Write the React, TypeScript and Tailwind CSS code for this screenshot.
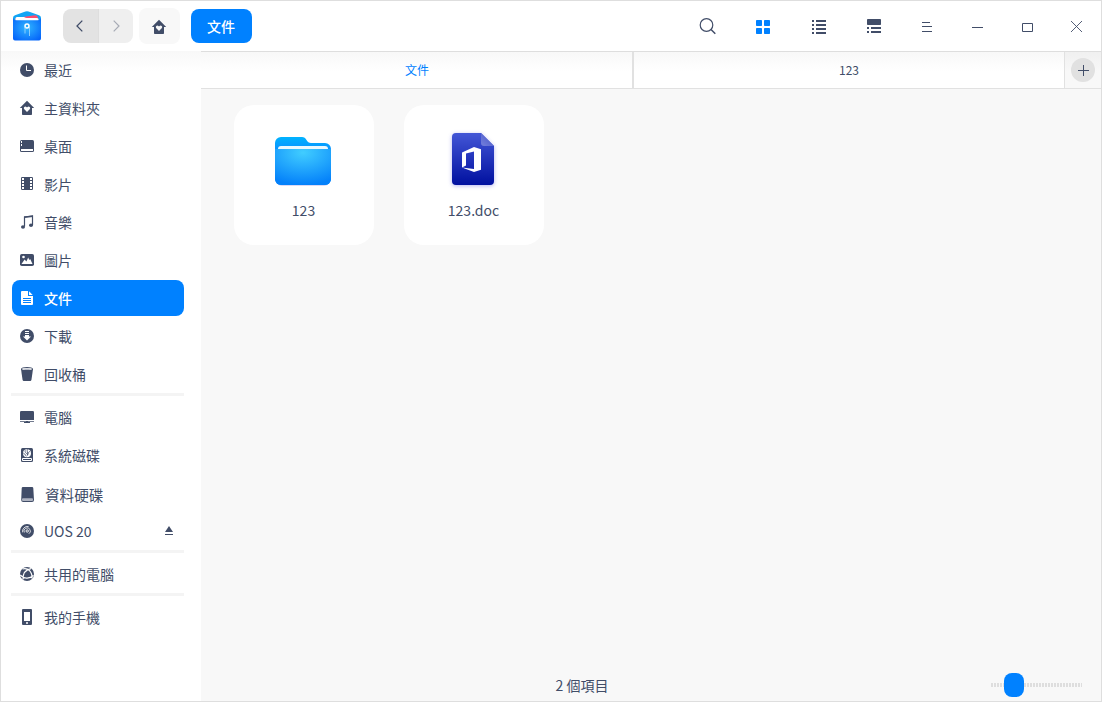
import type { ReactNode } from 'react';

const Svg16 = ({ children }: { children: ReactNode }) => (
  <svg width="16" height="16" viewBox="0 0 16 16" fill="currentColor" className="shrink-0">
    {children}
  </svg>
);

const HomeGlyph = () => (
  <path
    fillRule="evenodd"
    d="M8 .8 15.200 8H13v6.200a.8.8 0 0 1-.8.8H3.800a.8.8 0 0 1-.8-.8V8H.8zM8 12l2.700-2.700a1.500 1.500 0 0 0-2.200-2.200L8 7.600l-.5-.5a1.500 1.500 0 0 0-2.200 2.200z"
  />
);

const icons: Record<string, ReactNode> = {
  clock: (
    <>
      <circle cx="8" cy="8" r="7" />
      <path d="M7.5 3.5V8.5H12" fill="none" stroke="#fff" />
    </>
  ),
  home: <HomeGlyph />,
  desktop: (
    <>
      <rect x="1" y="2" width="14" height="12" rx="1.5" />
      <path d="M2 11h12v1.5a.5.5 0 0 1-.5.5h-11a.5.5 0 0 1-.5-.5zM2 3h1v2H2zM2 6h1v2H2z" fill="#fff" />
    </>
  ),
  film: (
    <>
      <rect x="2" y="1" width="12" height="13" rx="1.3" />
      <path
        d="M3 2h2v2H3zM3 5h2v2H3zM3 8h2v2H3zM3 11h2v2H3zM11 2h2v2h-2zM11 5h2v2h-2zM11 8h2v2h-2zM11 11h2v2h-2z"
        fill="#fff"
      />
    </>
  ),
  music: (
    <>
      <path d="M5.5 12.5V3L13.5 2V11" fill="none" stroke="currentColor" strokeWidth="1.2" />
      <path d="M5 2.5 14 1.5V3L5 4z" />
      <ellipse cx="4" cy="13" rx="2" ry="1.8" />
      <ellipse cx="12" cy="11.2" rx="2" ry="1.8" />
    </>
  ),
  picture: (
    <>
      <rect x="1" y="2" width="14" height="12" rx="1.8" />
      <circle cx="4.5" cy="5" r="1.3" fill="#fff" />
      <path d="M2.500 12 5.600 7.400 7.400 9.600 9.200 5.600 10.300 8 11.200 7 13.500 12z" fill="#fff" />
    </>
  ),
  document: (
    <>
      <path d="M3 1h6v5h5v8a1 1 0 0 1-1 1H3a1 1 0 0 1-1-1V2a1 1 0 0 1 1-1z" />
      <path d="M10 1.3 13.7 5H10z" />
      <path d="M4 8.5h8M4 10.5h8M4 12.5h8" stroke="#0081ff" />
    </>
  ),
  download: (
    <>
      <circle cx="8" cy="8" r="7" />
      <path d="M6 3h4v1H6zM6 5h4v1H6zM6 7h4v1.500h2L8 12.500l-4-4h2z" fill="#fff" />
    </>
  ),
  trash: (
    <>
      <ellipse cx="8" cy="3" rx="6" ry="2" />
      <path d="M2 3h12l-1.500 10.400c-.2 1-.8 1.600-1.800 1.600H5.300c-1 0-1.600-.6-1.800-1.600z" />
      <ellipse cx="8" cy="3" rx="5" ry="1.100" fill="#fff" />
      <ellipse cx="8" cy="3.300" rx="3.500" ry=".7" fill="#b4b9c5" />
    </>
  ),
  computer: (
    <>
      <rect x="1" y="2" width="14" height="9" rx="1.300" />
      <path d="M1 9h14v2H1zM7 12h2v1h2v1H5v-1h2z" />
      <path d="M1 12h14v1H1z" opacity=".75" />
    </>
  ),
  systemDisk: (
    <>
      <rect x="2" y="1" width="12" height="14" rx="1.500" />
      <circle cx="8" cy="6.200" r="4" fill="#fff" />
      <path
        d="M6.200 3.200c-.5 2 1 3 2.300 4.300M8.500 2.400c-.8 2 .5 2.800 0 5.600M10.800 4.200c-1 1-1.800 1.800-2.300 4.400M4.300 6.200c1 .2 2 1 3 3.200"
        fill="none"
        stroke="currentColor"
        strokeWidth=".8"
      />
      <path d="M3.500 11.500h9v2h-9z" fill="none" stroke="#fff" />
      <path d="M4 12h8v1H4z" />
    </>
  ),
  dataDisk: (
    <>
      <path d="M4 0h9a1.300 1.300 0 0 1 1.300 1.300L15 13a2 2 0 0 1-2 2H4.200a2 2 0 0 1-2-2L2.700 1.300A1.300 1.300 0 0 1 4 0z" />
      <rect x="3" y="11.300" width="11" height="2.700" rx="1" fill="#aeb3c0" />
    </>
  ),
  disc: (
    <>
      <circle cx="8" cy="8" r="7" />
      <circle cx="8.200" cy="8" r="1.200" fill="none" stroke="#fff" strokeWidth=".9" />
      <path d="M5.300 9.500a3.200 3.200 0 1 1 4.500 1.300M3.600 9.300a5 5 0 0 1 6-5.800" fill="none" stroke="#fff" strokeWidth=".8" />
    </>
  ),
  globe: (
    <>
      <circle cx="8" cy="8" r="7" />
      <path
        d="M3.500 3C9 1.500 13.500 5.500 13 12.500M12 2.600C7 3.500 3.800 7.500 4 13.500M1.200 9C4.500 12.500 10 13.500 14.500 9.500"
        fill="none"
        stroke="#fff"
        strokeWidth="1.200"
      />
    </>
  ),
  phone: (
    <path fillRule="evenodd" d="M4 0h8a1 1 0 0 1 1 1v14a1 1 0 0 1-1 1H4a1 1 0 0 1-1-1V1a1 1 0 0 1 1-1zM5 3v9h6V3zM7 13.200v1.500h2v-1.500z" />
  ),
};

type Place = { icon: string; label: string; active?: boolean; shifted?: boolean; eject?: boolean };

const groups: Place[][] = [
  [
    { icon: 'clock', label: '最近' },
    { icon: 'home', label: '主資料夾' },
    { icon: 'desktop', label: '桌面' },
    { icon: 'film', label: '影片' },
    { icon: 'music', label: '音樂' },
    { icon: 'picture', label: '圖片' },
    { icon: 'document', label: '文件', active: true },
    { icon: 'download', label: '下載' },
    { icon: 'trash', label: '回收桶' },
  ],
  [
    { icon: 'computer', label: '電腦' },
    { icon: 'systemDisk', label: '系統磁碟' },
    { icon: 'dataDisk', label: '資料硬碟', shifted: true },
    { icon: 'disc', label: 'UOS 20', eject: true },
  ],
  [{ icon: 'globe', label: '共用的電腦' }],
  [{ icon: 'phone', label: '我的手機' }],
];

const PlaceRow = ({ place }: { place: Place }) => (
  <li
    className={
      place.active
        ? 'flex h-9 items-center rounded-lg bg-[#0081ff] pr-[11px] pl-[7px] font-medium text-white'
        : place.shifted
          ? 'flex h-9 items-center pt-[3px] pr-[11px] pl-[7px] text-[14.6px]'
          : 'flex h-9 items-center pr-[11px] pl-[7px]'
    }
  >
    <Svg16>{icons[place.icon]}</Svg16>
    <span className={place.shifted ? 'ml-2.5 leading-5' : 'ml-[9px] leading-5'}>{place.label}</span>
    {place.eject && (
      <svg width="8" height="9" viewBox="0 0 8 9" fill="currentColor" className="mb-px ml-auto">
        <path d="M4 0 8 6H0zM0 8h8v1H0z" />
      </svg>
    )}
  </li>
);

const Sidebar = () => (
  <nav className="w-[200px] shrink-0 bg-white bg-linear-to-b from-[#f8f8f8] to-white to-[20px] pt-px">
    {groups.map((group, i) => (
      <div key={i}>
        {i > 0 && <div className="mt-px mb-[3px] ml-2.5 h-[3px] w-[173px] bg-[#f4f4f4]" />}
        <ul className="ml-[11px] flex w-[172px] flex-col gap-0.5">
          {group.map((p) => (
            <PlaceRow key={p.label} place={p} />
          ))}
        </ul>
      </div>
    ))}
  </nav>
);

const AppLogo = () => (
  <svg width="28" height="30" viewBox="0 0 28 30" className="mb-px">
    <defs>
      <radialGradient id="logoFront" cx=".5" cy=".45" r=".65">
        <stop offset="0" stopColor="#30b5ff" />
        <stop offset="1" stopColor="#0565fa" />
      </radialGradient>
    </defs>
    <path d="M0 9V7Q0 5 2 4.200L11 1Q14-.3 17 1L26 4.200Q28 5 28 7V9z" fill="#12a5f5" />
    <path d="M2.500 7 22 4.300Q25 4.500 25.500 9H2.500z" fill="#ff4c6e" />
    <path d="M2.500 7.500Q2.500 6 4 6H11Q12.500 7 14 7H24Q25.500 7 25.500 8.500V10H2.500z" fill="#fff" />
    <path d="M0 6Q0 9.300 3.500 9.300H24.500Q28 9.300 28 6V27.500Q28 29.500 26 29.500H2Q0 29.500 0 27.500z" fill="url(#logoFront)" />
    <circle cx="14" cy="15" r="2" fill="none" stroke="#fff" strokeWidth="1.500" />
    <path d="M12 16v6.500M16.500 16v9" stroke="#a5dcff" strokeWidth=".8" />
  </svg>
);

const TitleBar = () => (
  <header className="flex h-[50px] shrink-0 items-center bg-white pr-[19px] pl-3">
    <AppLogo />
    <div className="ml-[22px] flex h-[34px] w-[70px] overflow-hidden rounded-lg">
      <button className="flex w-[35px] items-center justify-center bg-[#e3e3e3] pr-0.5">
        <svg width="7" height="12" viewBox="0 0 7 12" fill="none" stroke="currentColor" strokeWidth="1.300">
          <path d="M6.300.600 1 6l5.300 5.400" />
        </svg>
      </button>
      <button className="flex w-[35px] items-center justify-center border-l border-[#dedede] bg-[#efefef] text-[#a7abb5]">
        <svg width="7" height="12" viewBox="0 0 7 12" fill="none" stroke="currentColor" strokeWidth="1.200">
          <path d="M.7.600 6 6 .7 11.400" />
        </svg>
      </button>
    </div>
    <button className="ml-1.5 flex h-9 w-[41px] items-center justify-center rounded-lg bg-[#f8f8f8] pt-px pr-px">
      <Svg16>
        <HomeGlyph />
      </Svg16>
    </button>
    <button className="ml-[11px] h-[34px] w-[61px] rounded-lg bg-[#0081ff] pr-px font-medium text-white">文件</button>

    <div className="mt-0.5 ml-auto flex items-center">
      <svg width="17" height="17" viewBox="0 0 17 17" fill="none" stroke="currentColor" strokeWidth="1.200" className="mb-0.5">
        <circle cx="7.500" cy="7" r="6.300" />
        <path d="m12 11.500 4.300 4.300" strokeWidth="1.500" />
      </svg>
      <svg width="14" height="14" viewBox="0 0 14 14" className="ml-10 fill-[#0081ff]">
        <rect width="6" height="6" rx=".7" />
        <rect x="8" width="6" height="6" rx=".7" />
        <rect y="8" width="6" height="6" rx=".7" />
        <rect x="8" y="8" width="6" height="6" rx=".7" />
      </svg>
      <svg width="14" height="14" viewBox="0 0 14 14" fill="currentColor" className="ml-[42px]">
        <path d="M0 0h2v2H0zM4 0h10v2H4zM0 4h2v2H0zM4 4h10v2H4zM0 8h2v2H0zM4 8h10v2H4zM0 12h2v2H0zM4 12h10v2H4z" />
      </svg>
      <svg width="14" height="14" viewBox="0 0 14 14" fill="currentColor" className="mb-0.5 ml-[41px]">
        <rect width="14" height="6" rx=".8" />
        <path d="M0 8h2v2H0zM4 8h10v2H4zM0 12h2v2H0zM4 12h10v2H4z" />
      </svg>
      <svg width="10" height="10" viewBox="0 0 10 10" fill="currentColor" className="ml-[41px]">
        <path d="M0 0h8v1H0zM0 4h10v1H0zM0 9h10v1H0z" />
      </svg>
      <svg width="11" height="1" viewBox="0 0 11 1" fill="currentColor" className="mt-px ml-10">
        <path d="M0 0h11v1H0z" />
      </svg>
      <svg width="11" height="9" viewBox="0 0 11 9" fill="none" stroke="currentColor" className="mt-px ml-[39px]">
        <path d="M.5.500h10v8H.5z" />
      </svg>
      <svg width="11" height="11" viewBox="0 0 11 11" fill="none" stroke="currentColor" strokeWidth=".9" className="mb-px ml-[38px]">
        <path d="m0 0 11 11M11 0 0 11" />
      </svg>
    </div>
  </header>
);

const FolderIcon = () => (
  <svg width="64" height="64" viewBox="0 0 64 64">
    <defs>
      <linearGradient id="folderBack" x2="0" y2="1">
        <stop offset="0" stopColor="#00b3ff" />
        <stop offset=".3" stopColor="#0b8dff" />
      </linearGradient>
      <radialGradient id="folderFront" cx=".5" cy=".1" r=".9">
        <stop offset="0" stopColor="#41cdff" />
        <stop offset="1" stopColor="#0481fa" />
      </radialGradient>
    </defs>
    <rect x="5" y="20" width="54" height="38" rx="6" fill="#b8b4ea" opacity=".5" />
    <path d="M4 15a6 6 0 0 1 6-6H31Q34 9 35.500 12 37 15 40 15H54a6 6 0 0 1 6 6V51a6 6 0 0 1-6 6H10a6 6 0 0 1-6-6z" fill="url(#folderBack)" />
    <path d="M7 22V21a3 3 0 0 1 3-3H54a3 3 0 0 1 3 3V22z" fill="#e9f8ff" />
    <path d="M4 21H60V51a6 6 0 0 1-6 6H10a6 6 0 0 1-6-6z" fill="url(#folderFront)" />
  </svg>
);

const DocIcon = () => (
  <svg width="64" height="64" viewBox="0 0 64 64">
    <defs>
      <linearGradient id="docBody" x2="0" y2="1">
        <stop offset="0" stopColor="#4356d6" />
        <stop offset="1" stopColor="#00109f" />
      </linearGradient>
      <linearGradient id="docFold" x1="1" y1="0" x2="0" y2="1">
        <stop offset=".4" stopColor="#5664ce" />
        <stop offset="1" stopColor="#7580dc" />
      </linearGradient>
    </defs>
    <path
      d="M15 5H40L53 18V53a4 4 0 0 1-4 4H15a4 4 0 0 1-4-4V9a4 4 0 0 1 4-4z"
      fill="url(#docBody)"
      className="drop-shadow-[0_1px_2px_rgba(70,70,220,0.4)]"
    />
    <path d="M40 5 53 18H43a3 3 0 0 1-3-3z" fill="url(#docFold)" />
    <path d="M21 24.500 33 19l7 2.300V41.700L33 44 21 39.500 33 41V23.500L25 25.500V37.500L21 39.500z" fill="#fff" />
  </svg>
);

const FileCard = ({ name, children }: { name: string; children: ReactNode }) => (
  <figure className="flex h-[140px] w-[140px] flex-col items-center rounded-[20px] bg-white pt-[23.5px] pr-px">
    {children}
    <figcaption className="mt-[8px] pl-px leading-[21px]">{name}</figcaption>
  </figure>
);

const Tabs = () => (
  <div className="flex h-[37px] shrink-0 border-b border-[#e1e1e1] bg-white bg-linear-to-b from-[#f8f8f8] to-white to-[20px] text-[12px]">
    <div className="flex w-[431px] items-center justify-center pl-px text-[#0081ff]">文件</div>
    <div className="flex w-[433px] items-center justify-center border-r border-l-2 border-[#e1e1e1]">123</div>
    <div className="flex flex-1 items-center justify-center bg-[#f7f7f7] bg-linear-to-b from-[#f0f0f0] to-[#f8f8f8] to-[20px]">
      <button className="flex size-6 items-center justify-center rounded-full bg-[#e1e1e1]">
        <svg width="11" height="11" viewBox="0 0 11 11" stroke="currentColor">
          <path d="M5.500 0v11M0 5.500h11" />
        </svg>
      </button>
    </div>
  </div>
);

const StatusBar = () => (
  <footer className="grid h-8 shrink-0 grid-cols-[1fr_auto_1fr] items-center">
    <span />
    <span className="mr-[138px] leading-5">2 個項目</span>
    <div className="mr-[18px] flex h-6 w-[92px] items-center justify-self-end bg-[repeating-linear-gradient(90deg,#dedede_0_2px,transparent_2px_3px)] bg-[length:91px_4px] bg-[position:0_50%] bg-no-repeat pl-[13px]">
      <div className="h-6 w-5 rounded-lg bg-[#0081ff]" />
    </div>
  </footer>
);

export default function App() {
  return (
    <div className="flex h-[702px] w-[1102px] flex-col overflow-hidden border border-[#dedede] bg-white font-['Noto_Sans_CJK_SC',sans-serif] text-[14px] text-[#414d68]">
      <TitleBar />
      <div className="flex min-h-0 flex-1">
        <Sidebar />
        <div className="flex flex-1 flex-col border-t border-[#dedede] bg-[#f8f8f8]">
          <Tabs />
          <main className="flex flex-1 gap-[30px] pt-[15.5px] pl-[32.5px]">
            <FileCard name="123">
              <FolderIcon />
            </FileCard>
            <FileCard name="123.doc">
              <DocIcon />
            </FileCard>
          </main>
          <StatusBar />
        </div>
      </div>
    </div>
  );
}
